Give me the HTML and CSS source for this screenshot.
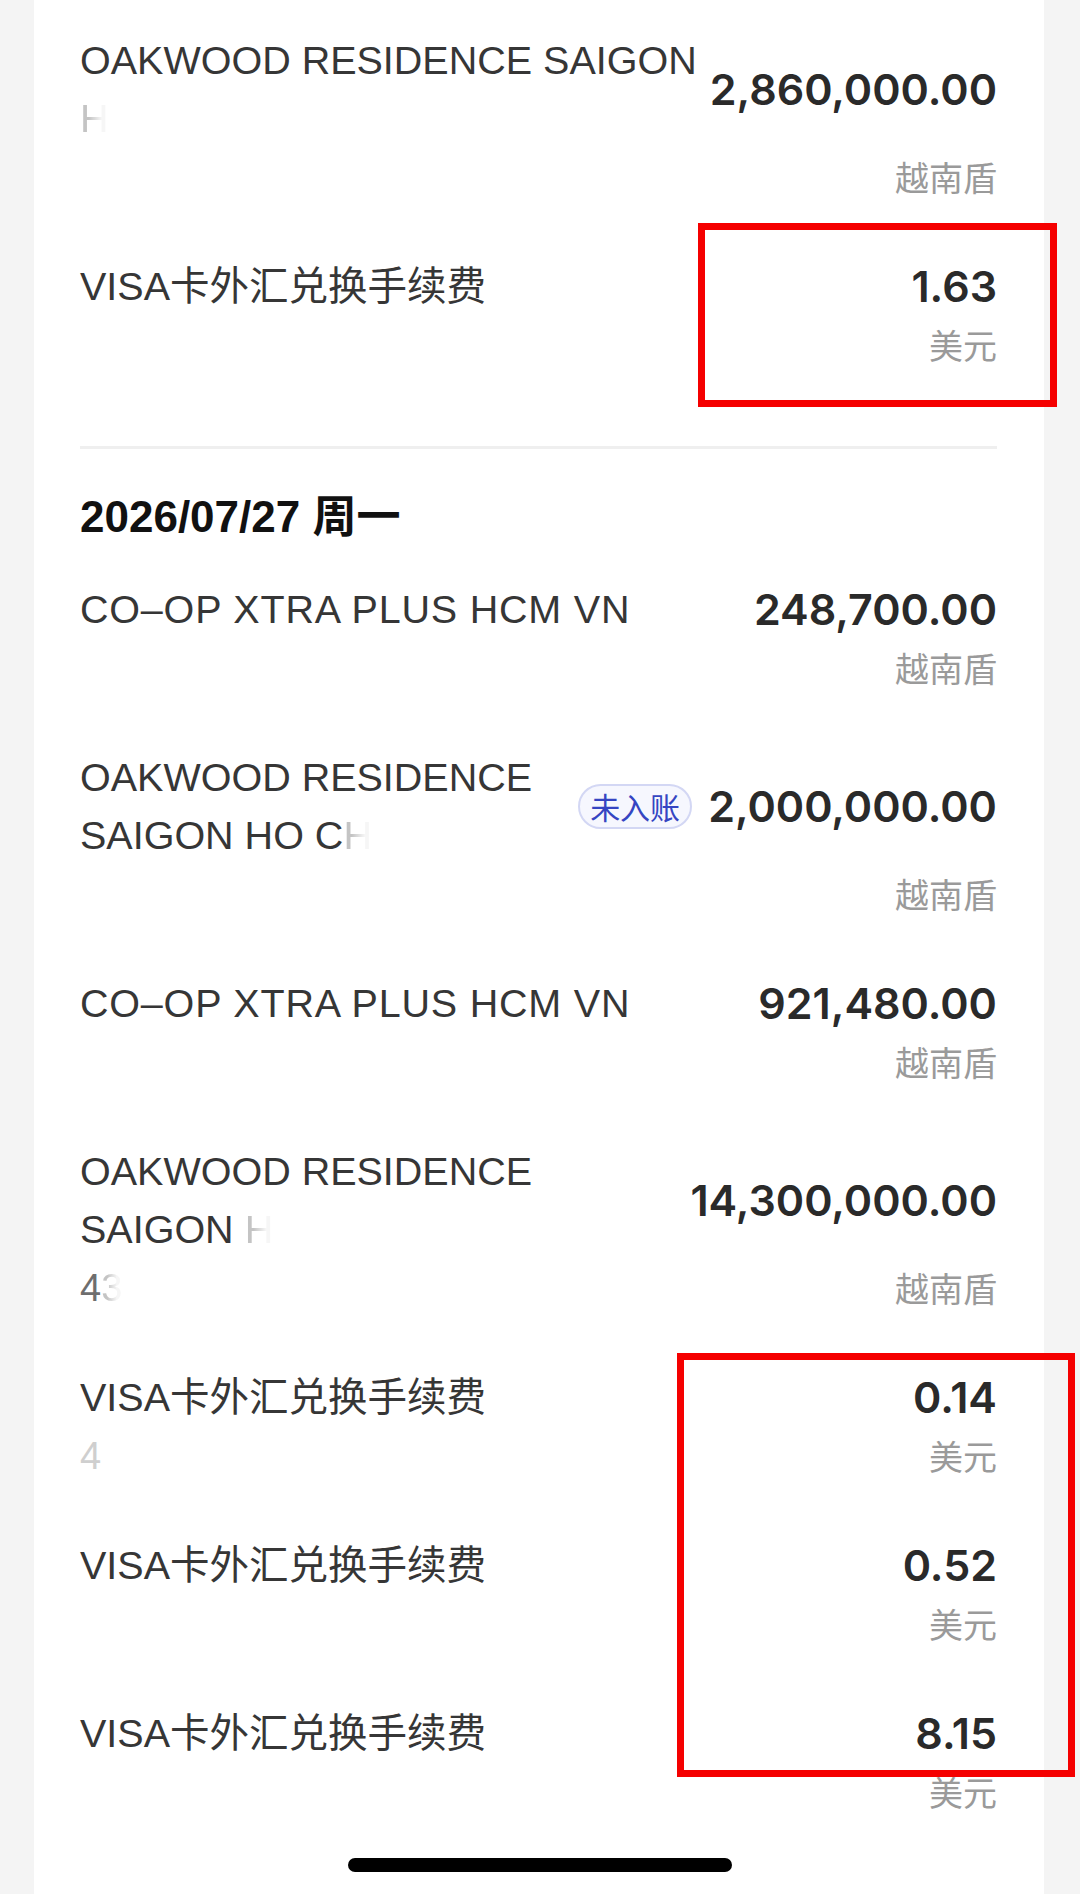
FILE: index.html
```html
<!DOCTYPE html>
<html lang="zh-CN">
<head>
<meta charset="utf-8">
<title>交易明细</title>
<link rel="stylesheet" href="styles.css">
</head>
<body>
<main class="card">
  <section class="group">
    <div class="txn">
      <div class="txn-main">
        <div class="title">OAKWOOD RESIDENCE SAIGON<br><span class="ghost">H</span></div>
        <div class="amount">2,860,000.00</div>
      </div>
      <div class="txn-sub"><span class="sub"></span><span class="cur">越南盾</span></div>
    </div>
    <div class="txn">
      <div class="txn-main">
        <div class="title">VISA卡外汇兑换手续费</div>
        <div class="amount">1.63</div>
      </div>
      <div class="txn-sub"><span class="sub"></span><span class="cur">美元</span></div>
    </div>
  </section>

  <hr class="divider">

  <section class="group">
    <h2 class="date">2026/07/27 周一</h2>
    <div class="txn">
      <div class="txn-main">
        <div class="title title-wide">CO–OP XTRA PLUS HCM VN</div>
        <div class="amount">248,700.00</div>
      </div>
      <div class="txn-sub"><span class="sub"></span><span class="cur">越南盾</span></div>
    </div>
    <div class="txn">
      <div class="txn-main">
        <div class="title">OAKWOOD RESIDENCE<br>SAIGON HO C<span class="ghost">H</span></div>
        <span class="badge">未入账</span>
        <div class="amount">2,000,000.00</div>
      </div>
      <div class="txn-sub"><span class="sub"></span><span class="cur">越南盾</span></div>
    </div>
    <div class="txn">
      <div class="txn-main">
        <div class="title title-wide">CO–OP XTRA PLUS HCM VN</div>
        <div class="amount">921,480.00</div>
      </div>
      <div class="txn-sub"><span class="sub"></span><span class="cur">越南盾</span></div>
    </div>
    <div class="txn">
      <div class="txn-main">
        <div class="title">OAKWOOD RESIDENCE<br>SAIGON <span class="ghost">H</span></div>
        <div class="amount">14,300,000.00</div>
      </div>
      <div class="txn-sub"><span class="sub">4<span class="ghost">3</span></span><span class="cur">越南盾</span></div>
    </div>
    <div class="txn">
      <div class="txn-main">
        <div class="title">VISA卡外汇兑换手续费</div>
        <div class="amount">0.14</div>
      </div>
      <div class="txn-sub"><span class="sub faint">4</span><span class="cur">美元</span></div>
    </div>
    <div class="txn">
      <div class="txn-main">
        <div class="title">VISA卡外汇兑换手续费</div>
        <div class="amount">0.52</div>
      </div>
      <div class="txn-sub"><span class="sub"></span><span class="cur">美元</span></div>
    </div>
    <div class="txn">
      <div class="txn-main">
        <div class="title">VISA卡外汇兑换手续费</div>
        <div class="amount">8.15</div>
      </div>
      <div class="txn-sub"><span class="sub"></span><span class="cur">美元</span></div>
    </div>
  </section>
</main>

<div class="mark mark-1"></div>
<div class="mark mark-2"></div>
<div class="home-indicator"></div>
</body>
</html>
```

FILE: styles.css
```css
html, body {
  margin: 0;
  padding: 0;
}

body {
  position: relative;
  background: #f4f4f4;
  width: 1080px;
  min-height: 1894px;
  overflow: hidden;
}

.card {
  margin-left: 34px;
  width: 1010px;
  min-height: 1894px;
  box-sizing: border-box;
  background: #ffffff;
  padding: 31px 47px 0 46px;
  font-family: "Liberation Sans", "Noto Sans CJK SC", sans-serif;
  color: #333333;
}

.group {
  display: flex;
  flex-direction: column;
  gap: 56px;
}

.txn {
  display: flex;
  flex-direction: column;
}

.txn-main {
  display: flex;
  align-items: center;
  gap: 16px;
}

.title {
  flex: 1;
  min-width: 0;
  font-size: 39.5px;
  line-height: 58px;
  color: #363636;
  white-space: nowrap;
}

.title-wide {
  letter-spacing: 0.8px;
}

.amount {
  flex: none;
  font-family: "Inter", "Liberation Sans", sans-serif;
  font-size: 43px;
  font-weight: 600;
  line-height: 58px;
  color: #2a2a2a;
  white-space: nowrap;
}

.txn-sub {
  display: flex;
  justify-content: space-between;
  margin-top: 6px;
  height: 48px;
  line-height: 48px;
}

.sub {
  font-size: 38px;
  color: #6e6e6e;
}

.sub.faint {
  color: #cfcfcf;
}

.cur {
  font-family: "Noto Sans CJK SC", sans-serif;
  font-size: 34px;
  color: #9a9a9a;
}

.ghost {
  color: #c4c4c4;
  -webkit-mask-image: linear-gradient(90deg, #000 30%, rgba(0,0,0,0.15) 75%);
  mask-image: linear-gradient(90deg, #000 30%, rgba(0,0,0,0.15) 75%);
}

.badge {
  flex: none;
  height: 45px;
  box-sizing: border-box;
  padding: 0 10px;
  border: 2px solid #d3d7f4;
  border-radius: 23px;
  background: #f6f7fe;
  font-family: "Noto Sans CJK SC", sans-serif;
  font-size: 30px;
  line-height: 41px;
  color: #3545c2;
}

.divider {
  margin: 77px 0 0 0;
  border: 0;
  height: 3px;
  background: #efefef;
}

.date {
  margin: 39px 0 -22px 0;
  font-family: "Liberation Sans", "Noto Sans CJK SC", sans-serif;
  font-size: 44px;
  font-weight: 700;
  line-height: 58px;
  color: #111111;
}

.mark {
  position: absolute;
  box-sizing: border-box;
  border: 7px solid #f50000;
}

.mark-1 {
  left: 698px;
  top: 223px;
  width: 359px;
  height: 184px;
}

.mark-2 {
  left: 677px;
  top: 1353px;
  width: 398px;
  height: 424px;
}

.home-indicator {
  position: absolute;
  left: 348px;
  top: 1858px;
  width: 384px;
  height: 14px;
  border-radius: 7px;
  background: #000000;
}
```
